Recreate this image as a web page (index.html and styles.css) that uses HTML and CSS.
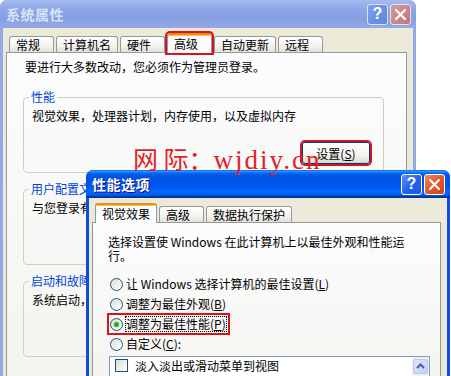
FILE: index.html
```html
<!DOCTYPE html>
<html lang="zh-CN">
<head>
  <meta charset="UTF-8">
  <title>系统属性 - 性能选项</title>
  <link rel="stylesheet" href="styles.css">
</head>
<body>

  <div class="desk">

    <!-- back window: System Properties (inactive) -->
    <div class="win win-back">
      <div class="titlebar">
        <span class="title">系统属性</span>
        <div class="tbtns">
          <span class="tbtn help">?</span>
          <span class="tbtn close">
            <svg width="21" height="21" viewBox="0 0 21 21"><path d="M6 6 L15 15 M15 6 L6 15" stroke="#fff" stroke-width="2.2" stroke-linecap="round"/></svg>
          </span>
        </div>
      </div>
      <div class="body">
        <div class="tabs">
          <span class="tab">常规</span>
          <span class="tab">计算机名</span>
          <span class="tab">硬件</span>
          <span class="tab sel mark">高级</span>
          <span class="tab">自动更新</span>
          <span class="tab">远程</span>
        </div>
        <div class="panel panel-back">
          <p class="note">要进行大多数改动，您必须作为管理员登录。</p>

          <fieldset class="group">
            <legend>性能</legend>
            <p>视觉效果，处理器计划，内存使用，以及虚拟内存</p>
            <div class="btnrow"><button class="btn mark">设置(<u>S</u>)</button></div>
          </fieldset>

          <!-- the buttons of these two groups sit under the front window -->
          <fieldset class="group covered">
            <legend>用户配置文件</legend>
            <p>与您登录有关的桌面设置</p>
          </fieldset>

          <fieldset class="group covered">
            <legend>启动和故障恢复</legend>
            <p>系统启动，系统失败和调试信息</p>
          </fieldset>
        </div>
      </div>
    </div>

    <!-- front window: Performance Options (active) -->
    <div class="win win-front">
      <div class="titlebar">
        <span class="title">性能选项</span>
        <div class="tbtns">
          <span class="tbtn help">?</span>
          <span class="tbtn close">
            <svg width="21" height="21" viewBox="0 0 21 21"><path d="M6 6 L15 15 M15 6 L6 15" stroke="#fff" stroke-width="2.2" stroke-linecap="round"/></svg>
          </span>
        </div>
      </div>
      <div class="body">
        <div class="tabs">
          <span class="tab sel">视觉效果</span>
          <span class="tab">高级</span>
          <span class="tab">数据执行保护</span>
        </div>
        <div class="panel panel-front">
          <p class="intro">选择设置使 Windows 在此计算机上以最佳外观和性能运<br>行。</p>

          <div class="opts">
            <label class="opt"><span class="radio"></span><span>让 Windows 选择计算机的最佳设置(<u>L</u>)</span></label>
            <label class="opt"><span class="radio"></span><span>调整为最佳外观(<u>B</u>)</span></label>
            <label class="opt mark"><span class="radio on"></span><span class="focus">调整为最佳性能(<u>P</u>)</span></label>
            <label class="opt"><span class="radio"></span><span>自定义(<u>C</u>):</span></label>
          </div>

          <div class="listbox">
            <div class="items">
              <div class="item"><span class="check"></span>淡入淡出或滑动菜单到视图</div>
            </div>
            <div class="scrollbar">
              <span class="sb-up">
                <svg width="15" height="15" viewBox="0 0 15 15"><path d="M4 9 L7.5 5.5 L11 9" fill="none" stroke="#4d6185" stroke-width="2"/></svg>
              </span>
            </div>
          </div>
        </div>
      </div>
    </div>

    <div class="watermark">网 际：<span class="wm-latin">wjdiy.cn</span></div>

  </div>

</body>
</html>
```

FILE: styles.css
```css
body {
  margin: 0;
  background-color: #fff;
  font-family: "Noto Sans CJK SC", "Liberation Sans", sans-serif;
  font-size: 12px;
  color: #000;
}

.desk {
  position: relative;
  width: 451px;
  height: 376px;
  overflow: hidden;
}

p {
  margin: 0;
  line-height: 14px;
}

/* windows */
.win {
  position: absolute;
  display: flex;
  flex-direction: column;
  border-radius: 7px 7px 0 0;
  overflow: hidden;
}

.win-back {
  left: 0;
  top: 0;
  width: 416px;
  height: 400px;
  background-color: #93a9e4;
}

.win-front {
  left: 86px;
  top: 170px;
  width: 364px;
  height: 230px;
  background-color: #0b4fdc;
}

.titlebar {
  flex: none;
  height: 28px;
  display: flex;
  align-items: center;
  justify-content: space-between;
  padding: 0 5px 0 6px;
}

.win-back .titlebar {
  background: linear-gradient(#a6baef, #8ca5e6 35%, #87a0e2 70%, #94aae5);
}

.win-front .titlebar {
  background: linear-gradient(#0058ee 0%, #3593ff 4%, #288eff 6%, #127dff 8%, #036ffc 10%, #0262ee 14%, #0057e5 20%, #0054e3 24%, #0055eb 56%, #005bf5 66%, #026afe 76%, #0062ef 86%, #0052d6 92%, #0040ab 94%, #003092 100%);
}

.title {
  font-size: 14px;
  font-weight: bold;
  letter-spacing: 0.5px;
}

.win-back .title {
  color: #d9e3f8;
}

.win-front .title {
  color: #fff;
  text-shadow: 1px 1px #0f1089;
}

.tbtns {
  display: flex;
  gap: 2px;
}

.tbtn {
  width: 21px;
  height: 21px;
  box-sizing: border-box;
  border: 1px solid #fff;
  border-radius: 3px;
  display: flex;
  align-items: center;
  justify-content: center;
  color: #fff;
  font-family: "Liberation Sans", sans-serif;
  font-size: 16px;
  font-weight: bold;
}

.tbtn svg {
  flex: none;
  margin: -1px;
}

.win-front .help {
  background: linear-gradient(135deg, #5c93fa, #2663ea 50%, #1b55de);
}

.win-front .close {
  background: linear-gradient(135deg, #f08a62, #e2582e 50%, #cf4318);
}

.win-back .tbtn {
  border-color: #dbe4f8;
}

.win-back .help {
  background: linear-gradient(135deg, #7ea0ec, #5d85de);
}

.win-back .close {
  background: linear-gradient(135deg, #d49a9a, #c47777);
}

.body {
  flex: 1;
  display: flex;
  flex-direction: column;
  background-color: #ece9d8;
  margin: 0 3px;
  padding: 5px 6px 0 3px;
  overflow: hidden;
}

/* tabs */
.tabs {
  flex: none;
  display: flex;
  align-items: flex-end;
  gap: 2px;
  height: 19px;
  padding-left: 3px;
}

.tab {
  height: 16px;
  min-width: 45px;
  box-sizing: border-box;
  padding: 0 6px;
  border: 1px solid #919b9c;
  border-bottom: none;
  border-radius: 3px 3px 0 0;
  background: linear-gradient(#fff, #f3f2ee 60%, #e3e1d8);
  line-height: 16px;
}

.tab.sel {
  height: 20px;
  margin-bottom: -1px;
  border-top: 2px solid #e68b2c;
  box-shadow: inset 0 1px #ffc83c;
  background: #fcfcfe;
  line-height: 17px;
  position: relative;
  z-index: 1;
}

.panel {
  flex: 1;
  border: 1px solid #919b9c;
  background: linear-gradient(#fcfcfe, #f4f3ee);
}

/* red annotation boxes */
.mark {
  outline: 2px solid #d8131b;
}

.tab.mark {
  outline-offset: 0;
}

/* back panel */
.panel-back {
  padding: 7px 0 0 16px;
}

.note {
  margin-left: 2px;
}

.group {
  width: 361px;
  box-sizing: border-box;
  min-width: 0;
  margin: 16px 0 0;
  padding: 5px 13px 8px 8px;
  border: 1px solid #d0d0bf;
  border-radius: 4px;
}

.group + .group {
  margin-top: 9px;
}

.group.covered {
  padding-bottom: 49px;
}

.group legend {
  padding: 0 2px;
  margin-left: -3px;
  color: #0046d5;
  line-height: 14px;
}

.btnrow {
  display: flex;
  justify-content: flex-end;
  margin-top: 19px;
}

.btn {
  width: 68px;
  height: 22px;
  padding: 0;
  border: 1px solid #003c74;
  border-radius: 3px;
  background: linear-gradient(#fff, #f5f4f0 60%, #e3e0d5 90%, #d6d0c5);
  font-family: inherit;
  font-size: 12px;
  color: #000;
}

/* front panel */
.panel-front {
  padding: 12px 0 0 15px;
}

.opts {
  display: flex;
  flex-direction: column;
  align-items: flex-start;
  margin-top: 11px;
}

.opt {
  height: 20px;
  display: flex;
  align-items: center;
  gap: 3px;
  padding: 0 3px 0 2px;
  line-height: 14px;
}

.opt.mark {
  outline-offset: -1px;
}

.radio {
  width: 13px;
  height: 13px;
  box-sizing: border-box;
  border: 1px solid #1c5180;
  border-radius: 50%;
  background: linear-gradient(135deg, #dcdcd7, #fff);
}

.radio.on {
  background: radial-gradient(circle, #1f9a1f 0, #3ec43e 2.5px, transparent 3.2px), linear-gradient(135deg, #dcdcd7, #fff);
}

.focus {
  outline: 1px dotted #000;
}

.listbox {
  display: flex;
  width: 321px;
  height: 40px;
  box-sizing: border-box;
  margin: 2px 0 0 1px;
  border: 1px solid #7f9db9;
  background-color: #fff;
}

.items {
  flex: 1;
}

.item {
  height: 17px;
  display: flex;
  align-items: center;
  gap: 7px;
  padding-left: 5px;
}

.check {
  width: 13px;
  height: 13px;
  box-sizing: border-box;
  border: 1px solid #1c5180;
  background: linear-gradient(135deg, #dcdcd7, #fff);
}

.scrollbar {
  width: 17px;
  background-color: #f3f1ec;
  padding-top: 2px;
}

.sb-up {
  display: block;
  width: 15px;
  height: 15px;
  margin-left: 1px;
  border-radius: 2px;
  background: linear-gradient(135deg, #dce6fd, #bcd0f8);
  border: 1px solid #b4c8f6;
  box-sizing: border-box;
}

.sb-up svg {
  display: block;
  margin: -1px;
}

/* watermark */
.watermark {
  position: absolute;
  left: 133px;
  top: 144px;
  z-index: 5;
  color: #e41e26;
  font-size: 25px;
  line-height: 28px;
  white-space: nowrap;
}

.wm-latin {
  font-family: "Liberation Serif", serif;
  font-size: 27px;
  letter-spacing: 2px;
}
```
